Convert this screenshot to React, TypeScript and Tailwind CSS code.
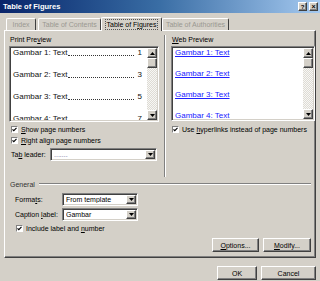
import React from 'react';

const FONT = "font-['Liberation_Sans',Arial,sans-serif]";
const SUNKEN =
  'border border-[#808080] border-r-white border-b-white shadow-[inset_1px_1px_0_#404040,inset_-1px_-1px_0_#d4d0c8]';
const RAISED =
  'border border-t-white border-l-white border-r-[#404040] border-b-[#404040] shadow-[inset_-1px_-1px_0_#808080]';

const U = ({ children }: { children: React.ReactNode }) => <span className="underline">{children}</span>;

const Arrow = ({ up }: { up?: boolean }) => (
  <svg width="5" height="3" viewBox="0 0 5 3">
    {up ? <path d="M2.5 0 L5 3 L0 3 Z" fill="#000" /> : <path d="M0 0 L5 0 L2.5 3 Z" fill="#000" />}
  </svg>
);

const ScrollBar = () => (
  <div className="w-[10px] h-full flex flex-col bg-[#ecebe7]">
    <div className={`h-[10px] ${RAISED} bg-[#d4d0c8] flex items-center justify-center`}>
      <Arrow up />
    </div>
    <div className={`h-[10px] ${RAISED} bg-[#d4d0c8]`} />
    <div className="flex-1 bg-[repeating-conic-gradient(#ffffff_0_25%,#d4d0c8_0_50%)] bg-[length:2px_2px] opacity-60" />
    <div className={`h-[10px] ${RAISED} bg-[#d4d0c8] flex items-center justify-center`}>
      <Arrow />
    </div>
  </div>
);

const CheckBox = ({ label }: { label: React.ReactNode }) => (
  <div className="flex items-center gap-[3px]">
    <div className="w-[7px] h-[7px] bg-white border border-[#808080] border-r-white border-b-white flex items-center justify-center shrink-0">
      <svg width="5" height="5" viewBox="0 0 5 5">
        <path d="M0.5 2.3 L1.8 3.7 L4.5 0.8" stroke="#000" strokeWidth="1.1" fill="none" />
      </svg>
    </div>
    <span>{label}</span>
  </div>
);

const Select = ({ value, w, muted }: { value: string; w: string; muted?: boolean }) => (
  <div className={`${w} h-[13px] bg-white ${SUNKEN} flex items-center pl-[3px] pr-[1px]`}>
    <span className={`flex-1 truncate ${muted ? 'text-[#6a6a9a]' : ''}`}>{value}</span>
    <div className={`w-[10px] h-[9px] ${RAISED} bg-[#d4d0c8] flex items-center justify-center`}>
      <Arrow />
    </div>
  </div>
);

const Button = ({ children, w }: { children: React.ReactNode; w: string }) => (
  <div className={`${w} h-[14px] ${RAISED} bg-[#d4d0c8] flex items-center justify-center`}>{children}</div>
);

const Tab = ({ label, selected, w }: { label: React.ReactNode; selected?: boolean; w: string }) => (
  <div
    className={`${w} flex items-center justify-center border-t border-l border-t-white border-l-white border-r border-r-[#404040] rounded-t-[2px] ${
      selected ? 'h-[14px] -mb-[1px] relative z-10 bg-[#d4d0c8] text-black' : 'h-[12px] text-[#9a9891]'
    }`}
  >
    {selected ? <span className="outline outline-1 outline-dotted outline-[#555] px-[1px] leading-[9px]">{label}</span> : label}
  </div>
);

const printRows = [
  ['Gambar 1: Text', '1'],
  ['Gambar 2: Text', '3'],
  ['Gambar 3: Text', '5'],
  ['Gambar 4: Text', '7'],
];

export default function App() {
  return (
    <div className={`w-[320px] h-[281px] bg-[#d4d0c8] flex flex-col overflow-hidden ${FONT} text-[7px] text-black leading-none`}>
      {/* title bar */}
      <div className="h-[13px] shrink-0 bg-gradient-to-r from-[#0a246a] via-[#3a6ea5] to-[#a6caf0] flex items-center pl-[3px] pr-[2px]">
        <span className="flex-1 text-white font-bold text-[7.5px]">Table of Figures</span>
        <div className={`w-[9px] h-[9px] ${RAISED} bg-[#d4d0c8] flex items-center justify-center font-bold text-[6px]`}>?</div>
        <div className={`w-[9px] h-[9px] ml-[2px] ${RAISED} bg-[#d4d0c8] flex items-center justify-center font-bold text-[7px]`}>×</div>
      </div>

      {/* tabs */}
      <div className="mt-[4px] ml-[6px] flex items-end h-[13px]">
        <Tab w="w-[30px]" label="Index" />
        <Tab w="w-[63px] ml-[2px]" label="Table of Contents" />
        <Tab w="w-[61px]" selected label={<>Table of F<U>i</U>gures</>} />
        <Tab w="w-[67px]" label="Table of Authorities" />
      </div>

      {/* tab panel */}
      <div className="mx-[4px] h-[228px] border border-t-white border-l-white border-r-[#404040] border-b-[#404040] shadow-[inset_-1px_-1px_0_#808080] flex flex-col">
        <div className="flex h-[146px] pt-[4px] pl-[4px]">
          {/* left column */}
          <div className="w-[150px] flex flex-col">
            <div className="h-[9px] flex items-center pl-[1px]">Print Pre<U>v</U>iew</div>
            <div className={`mt-[2px] h-[76px] bg-white ${SUNKEN} flex p-[1px]`}>
              <div className="flex-1 flex flex-col gap-[12px] pl-[2px] pr-[5px] overflow-hidden text-[8px] text-[#111]">
                {printRows.map(([t, n]) => (
                  <div key={t} className="h-[10px] flex items-end pb-[1px] shrink-0">
                    <span className="whitespace-nowrap">{t}</span>
                    <span className="flex-1 mb-[1px] h-[1px] border-b border-dotted border-[#333]" />
                    <span className="pl-[4px]">{n}</span>
                  </div>
                ))}
              </div>
              <ScrollBar />
            </div>
            <div className="mt-[2px] h-[10px] flex items-center pl-[2px]">
              <CheckBox label={<><U>S</U>how page numbers</>} />
            </div>
            <div className="mt-[1px] h-[10px] flex items-center pl-[2px]">
              <CheckBox label={<><U>R</U>ight align page numbers</>} />
            </div>
            <div className="mt-[3px] flex items-center pl-[2px]">
              <span className="w-[39px]">Ta<U>b</U> leader:</span>
              <Select w="w-[107px]" value="......." muted />
            </div>
          </div>

          {/* separator */}
          <div className="ml-[5px] w-[2px] h-[142px] border-l border-l-[#808080] border-r border-r-white" />

          {/* right column */}
          <div className="ml-[5px] w-[144px] flex flex-col">
            <div className="h-[9px] flex items-center pl-[1px]"><U>W</U>eb Preview</div>
            <div className={`mt-[2px] h-[75px] bg-white ${SUNKEN} flex p-[1px]`}>
              <div className="flex-1 flex flex-col gap-[11px] pl-[2px] overflow-hidden text-[8px] text-[#2020ff]">
                {printRows.map(([t]) => (
                  <div key={t} className="h-[10px] flex items-center shrink-0">
                    <span className="underline whitespace-nowrap">{t}</span>
                  </div>
                ))}
              </div>
              <ScrollBar />
            </div>
            <div className="mt-[3px] h-[10px] flex items-center pl-[1px]">
              <CheckBox label={<>Use <U>h</U>yperlinks instead of page numbers</>} />
            </div>
          </div>
        </div>

        {/* General */}
        <div className="mt-[3px] h-[8px] flex items-center pl-[5px] pr-[4px]">
          <span className="text-[#333]">General</span>
          <div className="flex-1 ml-[4px] h-[2px] border-t border-t-[#808080] border-b border-b-white" />
        </div>
        <div className="mt-[5px] flex items-center pl-[10px]">
          <span className="w-[47px]">Forma<U>t</U>s:</span>
          <Select w="w-[76px]" value="From template" />
        </div>
        <div className="mt-[2px] flex items-center pl-[10px]">
          <span className="w-[47px]">Caption <U>l</U>abel:</span>
          <Select w="w-[76px]" value="Gambar" />
        </div>
        <div className="mt-[3px] h-[8px] flex items-center pl-[11px]">
          <CheckBox label={<>Include label and <U>n</U>umber</>} />
        </div>
        <div className="mt-[6px] flex justify-end gap-[4px] pr-[4px]">
          <Button w="w-[47px]"><U>O</U>ptions...</Button>
          <Button w="w-[48px]"><U>M</U>odify...</Button>
        </div>
      </div>

      {/* dialog buttons */}
      <div className="mt-[8px] flex justify-end gap-[4px] pr-[4px]">
        <Button w="w-[40px]">OK</Button>
        <Button w="w-[55px]">Cancel</Button>
      </div>
    </div>
  );
}
